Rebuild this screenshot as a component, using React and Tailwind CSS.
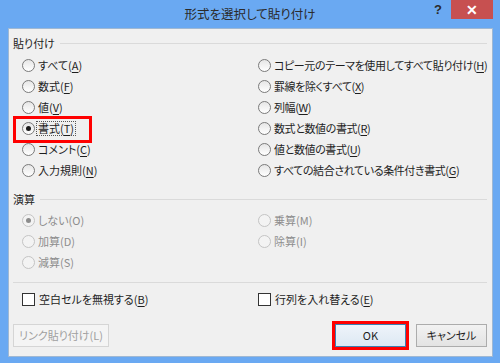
import React from "react";

const font = "font-['Noto_Sans_CJK_JP','Noto_Sans',sans-serif] [font-feature-settings:'palt']";

const pasteLeft = [
    ["すべて", "A"],
    ["数式", "F"],
    ["値", "V"],
    ["書式", "T"],
    ["コメント", "C"],
    ["入力規則", "N"],
];

const pasteRight = [
    ["コピー元のテーマを使用してすべて貼り付け", "H"],
    ["罫線を除くすべて", "X"],
    ["列幅", "W"],
    ["数式と数値の書式", "R"],
    ["値と数値の書式", "U"],
    ["すべての結合されている条件付き書式", "G"],
];

// Label with an underlined access key
function KeyLabel({ text, k, disabled }) {
    if (disabled) {
        return <span>{text}({k})</span>;
    }
    return (
        <span>
            {text}(<span className="underline underline-offset-[2px]">{k}</span>)
        </span>
    );
}

function RadioDot({ checked, disabled }) {
    const ring = disabled
        ? "border-[#c4c4c4] bg-[#f3f3f3]"
        : "border-[#7a7a7a] bg-gradient-to-b from-[#e6e6e6] to-white";
    return (
        <span className={`w-[13px] h-[13px] rounded-full border flex items-center justify-center shrink-0 ${ring}`}>
            {checked && (
                <span className={`w-[5px] h-[5px] rounded-full ${disabled ? "bg-[#8c8c8c]" : "bg-[#1a1a1a]"}`} />
            )}
        </span>
    );
}

function Radio({ text, k, checked, disabled, focused, marked, tight }) {
    return (
        <div className={`relative h-[21px] flex items-center gap-[3px] whitespace-nowrap ${tight ? "tracking-[-0.4px]" : ""} ${disabled ? "text-[#8d8d8d]" : "text-[#1e1e1e]"}`}>
            <RadioDot checked={checked} disabled={disabled} />
            {focused ? (
                <span className="border border-dotted border-[#555] px-px leading-[13px] -ml-[2px]">
                    <KeyLabel text={text} k={k} />
                </span>
            ) : (
                <KeyLabel text={text} k={k} disabled={disabled} />
            )}
            {/* red annotation box */}
            {marked && (
                <div className="absolute -left-[9px] -top-[2px] w-[79px] h-[27px] border-[3px] border-[#ff0000]" />
            )}
        </div>
    );
}

function Checkbox({ text, k }) {
    return (
        <div className="h-[21px] flex items-center gap-[4px] whitespace-nowrap text-[#1e1e1e]">
            <span className="w-[13px] h-[13px] border border-[#333] bg-white shrink-0" />
            <KeyLabel text={text} k={k} />
        </div>
    );
}

function GroupHeader({ title }) {
    return (
        <div className="h-[16px] flex items-center gap-[5px] text-[#1e1e1e]">
            <span>{title}</span>
            <div className="flex-1 h-px bg-[#dadada]" />
        </div>
    );
}

export default function App() {
    return (
        <div className={`w-[500px] h-[363px] bg-[#6aa9f2] flex flex-col text-[11px] ${font}`}>
            {/* Title bar */}
            <div className="h-[28px] grid grid-cols-[1fr_auto_1fr]">
                <div />
                <div className="pt-[3px] text-[12.5px] text-[#2b2b2b] leading-[22px]">形式を選択して貼り付け</div>
                <div className="flex justify-end items-start">
                    <span className="mt-[2px] mr-[9px] text-[13px] font-bold text-[#2b2b2b] leading-[16px] font-['Liberation_Sans',sans-serif]">?</span>
                    <div className="w-[42px] h-[19px] mr-[7px] bg-[#c75050] flex items-center justify-center text-white text-[14px] font-bold leading-none font-['Liberation_Sans',sans-serif]">
                        ✕
                    </div>
                </div>
            </div>

            {/* Dialog body */}
            <div className="ml-[8px] mr-[7px] h-[329px] bg-[#f0f0f0] border border-[#9fb8d3] pl-[4px] pr-[5px] pt-[6px] flex flex-col">
                <GroupHeader title="貼り付け" />
                <div className="mt-[4px] pl-[9px] grid grid-cols-[236px_1fr]">
                    {pasteLeft.map(([t, k], i) => (
                        <React.Fragment key={k}>
                            <Radio text={t} k={k} checked={i === 3} focused={i === 3} marked={i === 3} />
                            <Radio text={pasteRight[i][0]} k={pasteRight[i][1]} tight />
                        </React.Fragment>
                    ))}
                </div>

                <div className="mt-[10px]">
                    <GroupHeader title="演算" />
                </div>
                <div className="mt-[3px] pl-[9px] grid grid-cols-[236px_1fr]">
                    <Radio text="しない" k="O" checked disabled />
                    <Radio text="乗算" k="M" disabled />
                    <Radio text="加算" k="D" disabled />
                    <Radio text="除算" k="I" disabled />
                    <Radio text="減算" k="S" disabled />
                    <div />
                </div>

                <div className="mt-[9px] h-px bg-[#dadada]" />

                <div className="mt-[6px] pl-[9px] grid grid-cols-[236px_1fr]">
                    <Checkbox text="空白セルを無視する" k="B" />
                    <Checkbox text="行列を入れ替える" k="E" />
                </div>

                {/* Buttons */}
                <div className="mt-[11px] flex items-center">
                    <button className="w-[96px] h-[23px] border border-[#d5d5d5] bg-[#f4f4f4] text-[#a0a0a0] whitespace-nowrap">
                        リンク貼り付け(L)
                    </button>
                    <div className="ml-auto border-[3px] border-[#ff0000]">
                        <button className="w-[71px] h-[23px] border border-[#3c7fb1] bg-gradient-to-b from-[#eef4fa] to-[#dde8f3] text-[#1e1e1e]">
                            OK
                        </button>
                    </div>
                    <button className="ml-[7px] w-[71px] h-[23px] border border-[#acacac] bg-gradient-to-b from-[#f2f2f2] to-[#e3e3e3] text-[#1e1e1e]">
                        キャンセル
                    </button>
                </div>
            </div>
        </div>
    );
}
